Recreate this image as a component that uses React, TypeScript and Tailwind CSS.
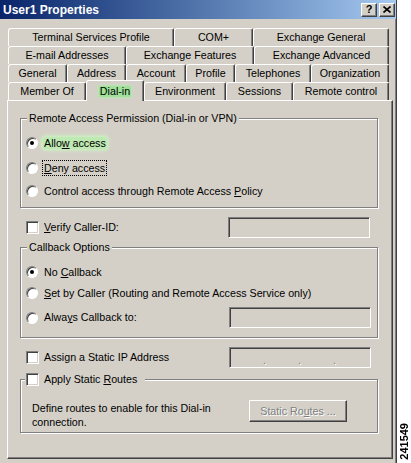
import React from "react";

/* classic Win2000 dialog pieces */

const Tab = ({
  label,
  w,
  active = false,
}: {
  label: React.ReactNode;
  w: string;
  active?: boolean;
}) => (
  <div
    className={`${w} ${
      active ? "relative z-10 h-[21px] -mb-[1px] bg-[#d4d0c8]" : "h-full"
    } flex items-center justify-center border-t border-l border-r border-t-white border-l-white border-r-[#404040] rounded-tl-[3px] rounded-tr-[2px] shadow-[inset_-1px_0_0_#808080]`}
  >
    {label}
  </div>
);

const Radio = ({ checked = false }: { checked?: boolean }) => (
  <div className="w-[12px] h-[12px] shrink-0 rounded-full bg-white border border-t-[#808080] border-l-[#808080] border-r-white border-b-white shadow-[inset_1px_1px_0_#404040] flex items-center justify-center">
    {checked && <div className="w-[4px] h-[4px] rounded-full bg-black" />}
  </div>
);

const Check = () => (
  <div className="w-[13px] h-[13px] shrink-0 bg-white border border-t-[#808080] border-l-[#808080] border-r-white border-b-white shadow-[inset_1px_1px_0_#404040,inset_-1px_-1px_0_#d4d0c8]" />
);

const Field = ({ children }: { children?: React.ReactNode }) => (
  <div className="ml-auto w-[142px] h-[21px] bg-[#d4d0c8] border border-t-[#808080] border-l-[#808080] border-r-white border-b-white shadow-[inset_1px_1px_0_#404040,inset_-1px_-1px_0_#d4d0c8] flex">
    {children}
  </div>
);

const Group = ({
  legend,
  h,
  children,
}: {
  legend: React.ReactNode;
  h: string;
  children: React.ReactNode;
}) => (
  <div
    className={`w-[358px] ${h} border border-[#808080] shadow-[inset_1px_1px_0_#fff,1px_1px_0_#fff] flex flex-col`}
  >
    {legend}
    {children}
  </div>
);

const Legend = ({ children }: { children: React.ReactNode }) => (
  <div className="-mt-[7px] ml-[6px] px-[2px] self-start bg-[#d4d0c8] leading-[13px]">
    {children}
  </div>
);

export default function App() {
  return (
    <div className="w-[411px] h-[463px] flex bg-white overflow-hidden font-['Liberation_Sans',Arial,sans-serif] text-[10.7px] text-black">
      <div className="w-[397px] h-[463px] shrink-0 bg-[#d4d0c8] flex flex-col border-r border-r-[#404040] shadow-[inset_-1px_0_0_#808080]">
        {/* title bar */}
        <div className="h-[19px] flex items-center pl-[3px] pr-[1px] bg-gradient-to-r from-[#0a246a] to-[#a6caf0]">
          <span className="text-white font-bold text-[12px] leading-none">
            User1 Properties
          </span>
          <div className="ml-auto flex gap-[2px]">
            <div className="w-[16px] h-[14px] bg-[#d4d0c8] border border-t-white border-l-white border-r-[#404040] border-b-[#404040] shadow-[inset_-1px_-1px_0_#808080] flex items-center justify-center font-bold text-[11px] leading-none">
              ?
            </div>
            <div className="w-[16px] h-[14px] bg-[#d4d0c8] border border-t-white border-l-white border-r-[#404040] border-b-[#404040] shadow-[inset_-1px_-1px_0_#808080] flex items-center justify-center">
              <svg width="8" height="7" viewBox="0 0 8 7">
                <path d="M0.5 0.5 L7.5 6.5 M7.5 0.5 L0.5 6.5" stroke="#000" strokeWidth="1.6" />
              </svg>
            </div>
          </div>
        </div>

        {/* tab rows */}
        <div className="mt-[9px] ml-[8px] flex flex-col">
          <div className="flex h-[18px]">
            <Tab w="w-[166px]" label="Terminal Services Profile" />
            <Tab w="w-[79px]" label="COM+" />
            <Tab w="w-[136px]" label="Exchange General" />
          </div>
          <div className="flex h-[18px]">
            <Tab w="w-[118px]" label="E-mail Addresses" />
            <Tab w="w-[128px]" label="Exchange Features" />
            <Tab w="w-[135px]" label="Exchange Advanced" />
          </div>
          <div className="flex h-[18px]">
            <Tab w="w-[59px]" label="General" />
            <Tab w="w-[59px]" label="Address" />
            <Tab w="w-[60px]" label="Account" />
            <Tab w="w-[49px]" label="Profile" />
            <Tab w="w-[76px]" label="Telephones" />
            <Tab w="w-[78px]" label="Organization" />
          </div>
          <div className="flex items-end h-[18px]">
            <Tab w="w-[78px]" label="Member Of" />
            <Tab
              w="w-[58px]"
              active
              label={
                <span className="px-[1px] bg-[#9fe09a] rounded-[2px] shadow-[0_0_2px_1px_#b5e8ae] leading-[11px]">
                  Dial-in
                </span>
              }
            />
            <Tab w="w-[82px]" label="Environment" />
            <Tab w="w-[67px]" label="Sessions" />
            <Tab w="w-[96px]" label="Remote control" />
          </div>
        </div>

        {/* page */}
        <div className="ml-[7px] w-[386px] h-[359px] border border-t-white border-l-white border-r-[#404040] border-b-[#404040] shadow-[inset_-1px_-1px_0_#808080] pl-[12px] flex flex-col">
          <div className="mt-[17px]">
            <Group
              h="h-[90px]"
              legend={<Legend>Remote Access Permission (Dial-in or VPN)</Legend>}
            >
              <div className="mt-[10px] ml-[5px] h-[16px] flex items-center gap-[6px]">
                <Radio checked />
                <span className="px-[1px] -ml-[1px] bg-[#bfe9b2] rounded-[3px] shadow-[0_0_3px_2px_#cdeec2] leading-[12px]">
                  Allo<u>w</u> access
                </span>
              </div>
              <div className="mt-[9px] ml-[5px] h-[16px] flex items-center gap-[4px]">
                <Radio />
                <span className="px-[1px] border border-dotted border-black leading-[14px]">
                  <u>D</u>eny access
                </span>
              </div>
              <div className="mt-[7px] ml-[5px] h-[16px] flex items-center gap-[6px]">
                <Radio />
                <span>
                  Control access through Remote Access <u>P</u>olicy
                </span>
              </div>
            </Group>
          </div>

          <div className="mt-[9px] ml-[6px] w-[344px] h-[21px] flex items-center gap-[5px]">
            <Check />
            <span>
              <u>V</u>erify Caller-ID:
            </span>
            <Field />
          </div>

          <div className="mt-[9px]">
            <Group h="h-[91px]" legend={<Legend>Callback Options</Legend>}>
              <div className="mt-[10px] ml-[5px] h-[16px] flex items-center gap-[6px]">
                <Radio checked />
                <span>
                  No <u>C</u>allback
                </span>
              </div>
              <div className="mt-[5px] ml-[5px] h-[16px] flex items-center gap-[6px]">
                <Radio />
                <span>
                  <u>S</u>et by Caller (Routing and Remote Access Service only)
                </span>
              </div>
              <div className="mt-[6px] ml-[5px] w-[345px] h-[21px] flex items-center gap-[6px]">
                <Radio />
                <span>
                  Alwa<u>y</u>s Callback to:
                </span>
                <Field />
              </div>
            </Group>
          </div>

          <div className="mt-[9px] ml-[6px] w-[345px] h-[21px] flex items-center gap-[5px]">
            <Check />
            <span>Assign a Static IP Address</span>
            <Field>
              {[0, 1, 2].map((i) => (
                <div
                  key={i}
                  className="flex-1 flex items-end justify-end pb-[2px] text-[#808080] [text-shadow:1px_1px_0_#fff] text-[11px] leading-[10px]"
                >
                  <span className="-mr-[1px]">.</span>
                </div>
              ))}
              <div className="flex-1" />
            </Field>
          </div>

          <div className="mt-[11px]">
            <Group
              h="h-[54px]"
              legend={
                <div className="-mt-[7px] ml-[4px] pl-[1px] pr-[8px] h-[13px] self-start flex items-center gap-[5px] bg-[#d4d0c8]">
                  <Check />
                  <span>
                    Apply Static <u>R</u>outes
                  </span>
                </div>
              }
            >
              <div className="mt-[14px] pl-[11px] flex items-start">
                <p className="w-[206px] pt-[1px] leading-[14px]">
                  Define routes to enable for this Dial-in connection.
                </p>
                <div className="ml-[11px] w-[98px] h-[22px] border border-t-white border-l-white border-r-[#404040] border-b-[#404040] shadow-[inset_-1px_-1px_0_#808080] flex items-center justify-center text-[#808080] [text-shadow:1px_1px_0_#fff]">
                  <span>
                    Static Ro<u>u</u>tes ...
                  </span>
                </div>
              </div>
            </Group>
          </div>
        </div>
      </div>

      {/* figure number */}
      <div className="flex-1 flex items-end justify-center pb-[3px]">
        <span className="[writing-mode:vertical-rl] rotate-180 text-[11px] leading-[11px] font-bold">
          241549
        </span>
      </div>
    </div>
  );
}
